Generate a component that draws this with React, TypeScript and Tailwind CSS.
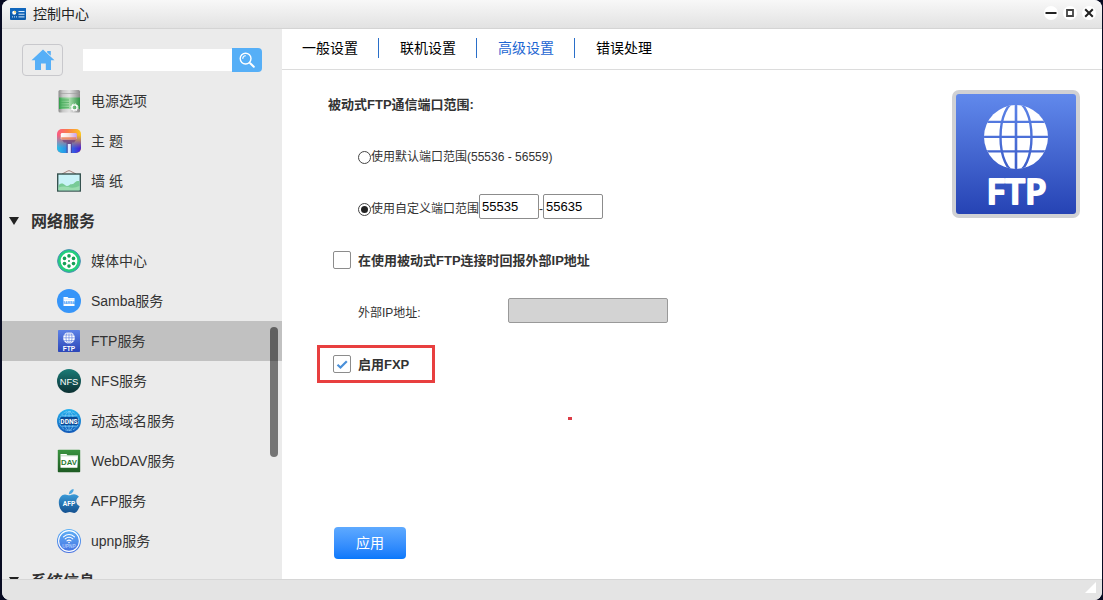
import { useState } from 'react';
import type { ReactNode } from 'react';

interface NavItem {
  label: string;
  icon: ReactNode;
}

interface NavGroupProps {
  title: string;
  items: NavItem[];
  active?: string;
  onSelect?: (label: string) => void;
}

function TitleIcon() {
  return (
    <svg className="h-4 w-4" viewBox="0 0 16 16" aria-hidden="true">
      <rect x="0" y="2" width="16" height="12" rx="1" fill="#0d5cab" />
      <rect x="0" y="2" width="16" height="5" rx="1" fill="#1167bd" />
      <circle cx="4.2" cy="6.8" r="2" fill="#fff" />
      <path d="M4.2 6.8V4.8a2 2 0 0 1 2 2z" fill="#f2d264" />
      <path d="M8.5 5.5h6M8.5 8.2h6M8.5 10.9h6" stroke="#d8ecff" strokeWidth="1" />
      <path d="M2 10.9h1M4 10.9h1M6 10.9h1" stroke="#d8ecff" strokeWidth="1" />
    </svg>
  );
}

function HomeIcon() {
  return (
    <svg className="h-6 w-6" viewBox="0 0 24 24" fill="#56aff7" aria-hidden="true">
      <path d="M12 1.5 23.5 12.3H20V22h-5.2v-6.4H10V22H4v-9.7H.5z" />
      <path d="M16.2 3h3.6v4.8l-3.6-3.4z" />
    </svg>
  );
}

function SearchIcon() {
  return (
    <svg className="h-4 w-4" viewBox="0 0 16 16" fill="none" stroke="#fff" strokeLinecap="round" aria-hidden="true">
      <circle cx="6.6" cy="6.6" r="5.4" strokeWidth="1.4" />
      <path d="M3.8 6.4a2.8 2.8 0 0 1 2.6-2.6" strokeWidth="1.1" />
      <path d="m11.2 11.2 3.6 3.6" strokeWidth="2" />
    </svg>
  );
}

function PowerIcon() {
  return (
    <svg className="h-6 w-6" viewBox="0 0 24 24" aria-hidden="true">
      <defs>
        <linearGradient id="power-metal">
          <stop offset="0" stopColor="#8a8a8a" />
          <stop offset=".2" stopColor="#c8c8c8" />
          <stop offset=".5" stopColor="#e4e4e4" />
          <stop offset=".8" stopColor="#b0b0b0" />
          <stop offset="1" stopColor="#8a8a8a" />
        </linearGradient>
        <linearGradient id="power-green">
          <stop offset="0" stopColor="#2f9a48" />
          <stop offset=".15" stopColor="#66be76" />
          <stop offset=".5" stopColor="#a5dba9" />
          <stop offset="1" stopColor="#2f9245" />
        </linearGradient>
      </defs>
      <rect x="1.5" y="1" width="21.5" height="22.5" rx="1.5" fill="url(#power-metal)" />
      <rect x="2" y="8.5" width="21" height="11.5" fill="url(#power-green)" />
      <path d="M2 4.500h21" stroke="#9a9a9a" strokeWidth=".6" />
      <path d="M3 11h9M3 13.5h9M3 16h9M3 18.5h9" stroke="#45a657" strokeWidth=".6" />
      <circle cx="17.5" cy="18.500" r="2.6" fill="none" stroke="#fff" strokeWidth="1.3" />
      <circle cx="17.5" cy="18.500" r="3.6" fill="none" stroke="#fff" strokeWidth="1" strokeDasharray="1.4 1.43" />
    </svg>
  );
}

function ThemeIcon() {
  return (
    <svg className="h-6 w-6" viewBox="0 0 24 24" aria-hidden="true">
      <defs>
        <linearGradient id="theme-top">
          <stop offset="0" stopColor="#fb5a83" />
          <stop offset=".45" stopColor="#fb7c4b" />
          <stop offset="1" stopColor="#fcc81c" />
        </linearGradient>
        <linearGradient id="theme-bottom">
          <stop offset="0" stopColor="#25c3ea" />
          <stop offset=".5" stopColor="#2b7de4" />
          <stop offset="1" stopColor="#4a1cd6" />
        </linearGradient>
        <linearGradient id="theme-fade" x2="0" y2="1">
          <stop offset=".25" stopColor="#fff" stopOpacity="0" />
          <stop offset=".8" stopColor="#fff" />
        </linearGradient>
        <linearGradient id="theme-roller">
          <stop offset="0" stopColor="#fff" />
          <stop offset=".5" stopColor="#fbe3dc" />
          <stop offset="1" stopColor="#c9a0f0" />
        </linearGradient>
        <mask id="theme-mask">
          <rect width="24" height="24" fill="url(#theme-fade)" />
        </mask>
      </defs>
      <rect width="24" height="24" rx="5" fill="url(#theme-top)" />
      <rect width="24" height="24" rx="5" fill="url(#theme-bottom)" mask="url(#theme-mask)" />
      <path d="M4.500 10h15l-2.500 3.500H15V24H9.500V13.500H7z" fill="#5d2470" opacity=".5" />
      <rect x="3.8" y="4" width="16" height="6.500" rx="1.200" fill="url(#theme-roller)" />
      <path d="M4.200 8.200h15v2.200h-15z" fill="#e8784e" opacity=".8" />
      <rect x="10.800" y="15" width="3" height="9" fill="#dfe8ff" />
    </svg>
  );
}

function WallpaperIcon() {
  return (
    <svg className="h-6 w-6" viewBox="0 0 24 24" aria-hidden="true">
      <path d="m5 5 5.800-3q1.200-.6 2.400 0L19 5" fill="none" stroke="#9c7770" strokeWidth=".9" />
      <rect x=".7" y="5" width="22.600" height="17" fill="#c9f3f8" stroke="#36524f" strokeWidth="1.400" />
      <path d="M1.500 16.500c2-2.800 4.700-2.400 6.500-.4 1.300 1.400 3 1.200 4.500-.2 1.400-1.200 3-.5 4-1.200 2-1.400 2.500-3.600 6-2.400v9h-21z" fill="#78cb97" />
      <path d="M1.500 18.500q5-2 10-.4t11-1v4.200h-21z" fill="#9addb0" />
    </svg>
  );
}

function MediaIcon() {
  return (
    <svg className="h-6 w-6" viewBox="0 0 24 24" aria-hidden="true">
      <circle cx="12" cy="12" r="11.4" fill="#23cf7c" stroke="#4b8fb5" strokeWidth="1" />
      <circle cx="12" cy="12" r="8.4" fill="#fff" />
      <g fill="#16a056">
        <circle cx="12" cy="6.900" r="1.8" />
        <circle cx="16.500" cy="9.4" r="1.8" />
        <circle cx="16.500" cy="14.6" r="1.8" />
        <circle cx="12" cy="17.100" r="1.8" />
        <circle cx="7.500" cy="14.6" r="1.8" />
        <circle cx="7.500" cy="9.4" r="1.8" />
        <circle cx="12" cy="12" r="1" />
      </g>
    </svg>
  );
}

function SambaIcon() {
  return (
    <svg className="h-6 w-6" viewBox="0 0 24 24" aria-hidden="true">
      <circle cx="12" cy="12" r="12" fill="#3695f9" />
      <path d="M6.500 8h4l1 1.100h6v7.900h-11z" fill="#fff" />
      <path d="M6.500 10.200h11" stroke="#a8d1fc" strokeWidth=".5" />
      <text x="12" y="15" textAnchor="middle" fontSize="3.200" fontWeight="700" fill="#3695f9">SAMBA</text>
    </svg>
  );
}

function FtpIcon() {
  return (
    <svg className="h-6 w-6" viewBox="0 0 24 24" aria-hidden="true">
      <defs>
        <linearGradient id="ftp-small" x2="0" y2="1">
          <stop offset="0" stopColor="#5d82e6" />
          <stop offset="1" stopColor="#2b46b8" />
        </linearGradient>
      </defs>
      <rect x="1" y="1" width="22" height="22" rx=".8" fill="url(#ftp-small)" />
      <circle cx="12" cy="8.8" r="5.9" fill="#fff" />
      <g fill="none" stroke="#5477de" strokeWidth=".6">
        <ellipse cx="12" cy="8.8" rx="3" ry="6" />
        <path d="M12 2.8v12M6 8.8h12M6.8 6h10.4M6.8 11.6h10.4" />
      </g>
      <text x="12" y="21.8" textAnchor="middle" fontSize="6.500" fontWeight="700" fill="#fff">FTP</text>
    </svg>
  );
}

function NfsIcon() {
  return (
    <svg className="h-6 w-6" viewBox="0 0 24 24" aria-hidden="true">
      <defs>
        <linearGradient id="nfs-bg" x2="0" y2="1">
          <stop offset="0" stopColor="#1b7c77" />
          <stop offset="1" stopColor="#0c3033" />
        </linearGradient>
      </defs>
      <circle cx="12" cy="12" r="12" fill="url(#nfs-bg)" />
      <text x="12" y="15.600" textAnchor="middle" fontSize="9.400" fill="#fff">NFS</text>
    </svg>
  );
}

function DdnsIcon() {
  return (
    <svg className="h-6 w-6" viewBox="0 0 24 24" aria-hidden="true">
      <defs>
        <linearGradient id="ddns-bg" x2="0" y2="1">
          <stop offset="0" stopColor="#27b4ef" />
          <stop offset="1" stopColor="#1259b8" />
        </linearGradient>
      </defs>
      <circle cx="12" cy="12" r="12" fill="url(#ddns-bg)" />
      <g fill="none" stroke="#8fd4fa" strokeWidth=".6">
        <circle cx="12" cy="12" r="9.6" strokeDasharray="3 1" />
        <ellipse cx="12" cy="12" rx="4.5" ry="9.4" />
        <path d="M12 2.5v19M4.5 6.7h15M4.5 17.3h15" />
      </g>
      <rect x="3" y="8" width="18" height="8" rx="2" fill="#0b4a96" />
      <text x="12" y="14.500" textAnchor="middle" fontFamily="Roboto, sans-serif" fontSize="6.600" fontWeight="700" fill="#fff">
        DDNS
      </text>
    </svg>
  );
}

function DavIcon() {
  return (
    <svg className="h-6 w-6" viewBox="0 0 24 24" aria-hidden="true">
      <defs>
        <linearGradient id="dav-bg" x2="0" y2="1">
          <stop offset="0" stopColor="#3a9440" />
          <stop offset="1" stopColor="#1d5a22" />
        </linearGradient>
      </defs>
      <rect x=".8" y=".8" width="22.4" height="22.4" rx=".8" fill="url(#dav-bg)" />
      <path d="M3.500 5h6l1 1.200H21l-.6 12.600H3.500z" fill="#fff" />
      <path d="M3.500 6.800H21" stroke="#7fb684" strokeWidth=".5" />
      <text x="12" y="15.800" textAnchor="middle" fontSize="7.800" fontWeight="700" fill="#2b7a31">DAV</text>
    </svg>
  );
}

function AfpIcon() {
  return (
    <svg className="h-6 w-6" viewBox="0 0 24 24" aria-hidden="true">
      <defs>
        <linearGradient id="afp-bg" x2="0" y2="1">
          <stop offset="0" stopColor="#3a9bd9" />
          <stop offset="1" stopColor="#14508f" />
        </linearGradient>
      </defs>
      <path d="M16.6 0c.3 2.6-2 5.3-4.7 5.2C11.700 2.800 14 .3 16.600 0z" fill="#4ba6df" />
      <path
        d="M12.200 6.300c1.300 0 2.600-1.100 4.800-1.100 2 0 3.800 1 4.900 2.600-3.900 2.400-3.200 7.800.8 9.400-.9 2.600-3 6.800-5.500 6.800-1.700 0-2.200-1-4.400-1s-2.800 1-4.400 1C4.900 24 1.800 18.300 1.800 13.400c0-4.700 3-8 6.200-8 1.800 0 3 .9 4.200.9z"
        fill="url(#afp-bg)"
      />
      <text x="12" y="17.300" textAnchor="middle" fontFamily="Roboto, sans-serif" fontSize="6.600" fontWeight="700" fill="#fff">
        AFP
      </text>
    </svg>
  );
}

function UpnpIcon() {
  return (
    <svg className="h-6 w-6" viewBox="0 0 24 24" aria-hidden="true">
      <defs>
        <linearGradient id="upnp-bg" x2="0" y2="1">
          <stop offset="0" stopColor="#5fb2f7" />
          <stop offset="1" stopColor="#4670e0" />
        </linearGradient>
      </defs>
      <circle cx="12" cy="12" r="12" fill="url(#upnp-bg)" />
      <circle cx="12" cy="12" r="10.4" fill="none" stroke="#fff" strokeWidth="1.1" />
      <g fill="none" stroke="#fff" strokeWidth="1.100" strokeLinecap="round">
        <path d="M6.500 7.800q5.500-4.600 11 0" />
        <path d="M8.200 9.900q3.800-3.200 7.600 0" />
        <path d="M10 11.900q2-1.600 4 0" />
      </g>
      <circle cx="12" cy="13.500" r=".8" fill="#fff" />
      <text x="12" y="18.800" textAnchor="middle" fontSize="4.800" fontWeight="700" fill="#a8c8fb">UPNP</text>
    </svg>
  );
}

function FtpLogo() {
  return (
    <svg className="h-32 w-32 shrink-0" viewBox="0 0 128 128" role="img" aria-label="FTP">
      <defs>
        <linearGradient id="ftp-logo" x2="0" y2="1">
          <stop offset="0" stopColor="#6189ec" />
          <stop offset="1" stopColor="#2643b4" />
        </linearGradient>
        <linearGradient id="ftp-lines" gradientUnits="userSpaceOnUse" x1="0" y1="4" x2="0" y2="124">
          <stop offset="0" stopColor="#6189ec" />
          <stop offset="1" stopColor="#2643b4" />
        </linearGradient>
        <clipPath id="ftp-globe">
          <circle cx="64" cy="47" r="32" />
        </clipPath>
      </defs>
      <rect width="128" height="128" rx="7" fill="#d0d1d4" />
      <rect x="4" y="4" width="120" height="120" rx="3" fill="url(#ftp-logo)" />
      <circle cx="64" cy="47" r="32" fill="#fff" />
      <g clipPath="url(#ftp-globe)" fill="none" stroke="url(#ftp-lines)" strokeWidth="2.400">
        <ellipse cx="64" cy="47" rx="15.500" ry="35" />
        <path d="M63.500 14h1v66h-1zM30 31.500h68v.6H30zM30 46.500h68v.6H30zM30 61h68v.6H30z" strokeWidth="1.600" />
      </g>
      <text
        x="64.500"
        y="114"
        textAnchor="middle"
        fontFamily="Open Sans, sans-serif"
        fontSize="35"
        fontWeight="600"
        fill="#fff"
        stroke="#fff"
        strokeWidth="2"
        strokeLinejoin="round"
      >
        FTP
      </text>
    </svg>
  );
}

const generalItems: NavItem[] = [
  { label: '电源选项', icon: <PowerIcon /> },
  { label: '主 题', icon: <ThemeIcon /> },
  { label: '墙 纸', icon: <WallpaperIcon /> },
];

const networkItems: NavItem[] = [
  { label: '媒体中心', icon: <MediaIcon /> },
  { label: 'Samba服务', icon: <SambaIcon /> },
  { label: 'FTP服务', icon: <FtpIcon /> },
  { label: 'NFS服务', icon: <NfsIcon /> },
  { label: '动态域名服务', icon: <DdnsIcon /> },
  { label: 'WebDAV服务', icon: <DavIcon /> },
  { label: 'AFP服务', icon: <AfpIcon /> },
  { label: 'upnp服务', icon: <UpnpIcon /> },
];

const tabs = ['一般设置', '联机设置', '高级设置', '错误处理'];

function NavList({ items, active, onSelect }: Omit<NavGroupProps, 'title'>) {
  return (
    <ul>
      {items.map((item) => (
        <li key={item.label}>
          <a
            href="#"
            onClick={() => onSelect?.(item.label)}
            className={`flex h-10 items-center gap-[10px] pl-[55px] text-sm text-[#333] ${
              item.label === active ? 'bg-[#c1c1c1]' : ''
            }`}
          >
            {item.icon}
            {item.label}
          </a>
        </li>
      ))}
    </ul>
  );
}

function NavGroup({ title, items, active, onSelect }: NavGroupProps) {
  return (
    <section>
      <button type="button" className="flex h-10 w-full items-center gap-3 pt-[2px] pl-[7px] text-base font-bold text-[#333]">
        <svg className="mb-[2px] h-2 w-[10px]" viewBox="0 0 10 8" fill="#222" aria-hidden="true">
          <path d="M0 0h10L5 8z" />
        </svg>
        {title}
      </button>
      <NavList items={items} active={active} onSelect={onSelect} />
    </section>
  );
}

function Sidebar() {
  const [active, setActive] = useState('FTP服务');

  return (
    <aside className="relative flex w-[280px] shrink-0 flex-col bg-[#ebebeb]">
      <div className="flex h-[52px] shrink-0 items-center pt-[10px] pl-5">
        <button
          type="button"
          aria-label="主页"
          className="flex h-8 w-[41px] items-center justify-center rounded-sm border border-[#c8c8cc]"
        >
          <HomeIcon />
        </button>
        <input type="text" aria-label="搜索" className="ml-5 h-[22px] w-[149px] bg-white px-1 text-xs outline-none" />
        <button
          type="button"
          aria-label="搜索"
          className="flex h-6 w-[30px] items-center justify-center rounded-r bg-[#56aff7]"
        >
          <SearchIcon />
        </button>
      </div>
      <nav className="min-h-0 flex-1 overflow-hidden">
        <NavList items={generalItems} active={active} onSelect={setActive} />
        <NavGroup title="网络服务" items={networkItems} active={active} onSelect={setActive} />
        <NavGroup title="系统信息" items={[]} />
      </nav>
      {/* Scroll thumb */}
      <div className="absolute top-[298px] right-1 h-[130px] w-2 rounded-full bg-black/50" />
    </aside>
  );
}

function TitleBar() {
  return (
    <header className="flex h-[29px] shrink-0 items-center border-b border-[#d4d4d4] bg-linear-to-b from-[#f8f8f8] to-[#e2e2e2] pr-[6px] pl-2">
      <TitleIcon />
      <h1 className="ml-[7px] text-sm leading-5 text-[#222]">控制中心</h1>
      <div className="mb-[2px] ml-auto flex gap-[5px]">
        <button type="button" aria-label="最小化" className="h-[14px] w-[14px] rounded-full bg-white">
          <svg viewBox="0 0 14 14" aria-hidden="true">
            <path d="M1.500 7h11" stroke="#222" strokeWidth="2" />
          </svg>
        </button>
        <button type="button" aria-label="最大化" className="h-[14px] w-[14px] rounded-full bg-white">
          <svg viewBox="0 0 14 14" aria-hidden="true">
            <path d="M4 4h6v6H4z" fill="none" stroke="#444" strokeWidth="1.800" />
          </svg>
        </button>
        <button type="button" aria-label="关闭" className="h-[14px] w-[14px] rounded-full bg-white">
          <svg viewBox="0 0 14 14" aria-hidden="true">
            <path d="m3.200 3.200 7.600 7.600M10.800 3.200l-7.600 7.600" stroke="#222" strokeWidth="2" />
          </svg>
        </button>
      </div>
    </header>
  );
}

const radioClass =
  "grid h-[13px] w-[13px] appearance-none place-items-center rounded-full border border-[#444] bg-white checked:before:h-[7px] checked:before:w-[7px] checked:before:rounded-full checked:before:bg-[#222] checked:before:content-['']";

const checkboxClass = 'peer h-[18px] w-[18px] appearance-none rounded-xs border border-[#8c8c8c] bg-white [grid-area:1/1]';

const portClass = 'mb-[6px] h-[25px] w-[60px] rounded-xs border border-[#8c8c8c] bg-white px-[2px] text-[13px] text-black';

function Checkbox({ checked, onChange }: { checked: boolean; onChange: (checked: boolean) => void }) {
  return (
    <span className="mb-[2px] grid">
      <input type="checkbox" className={checkboxClass} checked={checked} onChange={(e) => onChange(e.target.checked)} />
      <svg
        className="pointer-events-none hidden h-[18px] w-[18px] [grid-area:1/1] peer-checked:block"
        viewBox="0 0 18 18"
        aria-hidden="true"
      >
        <path d="m4.500 9.800 3 2.700 6.300-6.300" fill="none" stroke="#4a90d9" strokeWidth="2.200" />
      </svg>
    </span>
  );
}

function FtpSettings() {
  const [range, setRange] = useState<'default' | 'custom'>('custom');
  const [from, setFrom] = useState('55535');
  const [to, setTo] = useState('55635');
  const [reportIp, setReportIp] = useState(false);
  const [fxp, setFxp] = useState(true);

  return (
    <form className="relative flex flex-1 flex-col pt-[9px] pb-5 pl-[35px] text-xs text-[#333]">
      <h2 className="flex h-[52px] items-center pl-[11px] text-[13px] font-bold">被动式FTP通信端口范围:</h2>
      <label className="flex h-[52px] items-center pl-[41px]">
        <input
          type="radio"
          name="range"
          className={radioClass}
          checked={range === 'default'}
          onChange={() => setRange('default')}
        />
        使用默认端口范围(55536 - 56559)
      </label>
      <div className="flex h-[52px] items-center pl-[41px]">
        <label className="flex items-center">
          <input
            type="radio"
            name="range"
            className={radioClass}
            checked={range === 'custom'}
            onChange={() => setRange('custom')}
          />
          使用自定义端口范围
        </label>
        <input
          type="text"
          aria-label="起始端口"
          className={portClass}
          value={from}
          onChange={(e) => setFrom(e.target.value)}
        />
        -
        <input
          type="text"
          aria-label="结束端口"
          className={portClass}
          value={to}
          onChange={(e) => setTo(e.target.value)}
        />
      </div>
      <label className="flex h-[52px] items-center gap-[7px] pl-4 text-[13px] font-bold">
        <Checkbox checked={reportIp} onChange={setReportIp} />
        在使用被动式FTP连接时回报外部IP地址
      </label>
      <div className="flex h-[52px] items-center pl-[41px]">
        <label htmlFor="external-ip" className="w-[150px]">
          外部IP地址:
        </label>
        <input
          id="external-ip"
          type="text"
          disabled={!reportIp}
          className="mb-[6px] h-[25px] w-40 rounded-xs border border-[#999] bg-white px-[2px] text-[13px] disabled:bg-[#d3d3d3]"
        />
      </div>
      <div className="flex h-[50px] items-center">
        <label className="flex h-[38px] w-[118px] items-center gap-[7px] border-3 border-[#e83f3f] pt-[2px] pl-[13px] text-[13px] font-bold">
          <Checkbox checked={fxp} onChange={setFxp} />
          启用FXP
        </label>
      </div>
      <div className="absolute top-[347px] left-[286px] h-[3px] w-1 bg-[#dc3c46]" />
      <button
        type="button"
        className="mt-auto ml-[17px] h-8 w-[72px] rounded bg-linear-to-b from-[#5eaaff] to-[#0878fb] text-sm text-white"
      >
        应用
      </button>
    </form>
  );
}

export default function App() {
  const [tab, setTab] = useState('高级设置');

  return (
    <div className="h-screen bg-[#080b22] pr-px pl-[2px] font-['Liberation_Sans','Noto_Sans_CJK_SC',sans-serif]">
      <div className="flex h-full flex-col overflow-hidden rounded-lg bg-white">
        <TitleBar />
        <div className="flex min-h-0 flex-1">
          <Sidebar />
          <main className="flex min-w-0 flex-1 flex-col bg-white">
            <div role="tablist" className="flex h-[41px] shrink-0 items-center border-b border-[#dcdcdc] pb-[2px]">
              {tabs.map((name) => (
                <button
                  key={name}
                  type="button"
                  role="tab"
                  aria-selected={name === tab}
                  onClick={() => setTab(name)}
                  className={`h-5 border-[#2a6fc9] px-5 text-sm leading-5 not-last:border-r not-first:pl-[21px] ${
                    name === tab ? 'text-[#1d66d2]' : 'text-black'
                  }`}
                >
                  {name}
                </button>
              ))}
            </div>
            <div className="flex min-h-0 flex-1">
              <FtpSettings />
              <div className="pt-5 pr-[22px]">
                <FtpLogo />
              </div>
            </div>
          </main>
        </div>
        <footer className="flex h-[21px] shrink-0 items-center justify-end border-t border-[#d6d6d6] bg-[#e4e4e4] pr-[6px] pb-[5px]">
          <svg className="h-[11px] w-[11px]" viewBox="0 0 11 11" fill="#fff" aria-hidden="true">
            <path d="M11 0v11H0z" />
          </svg>
        </footer>
      </div>
    </div>
  );
}
